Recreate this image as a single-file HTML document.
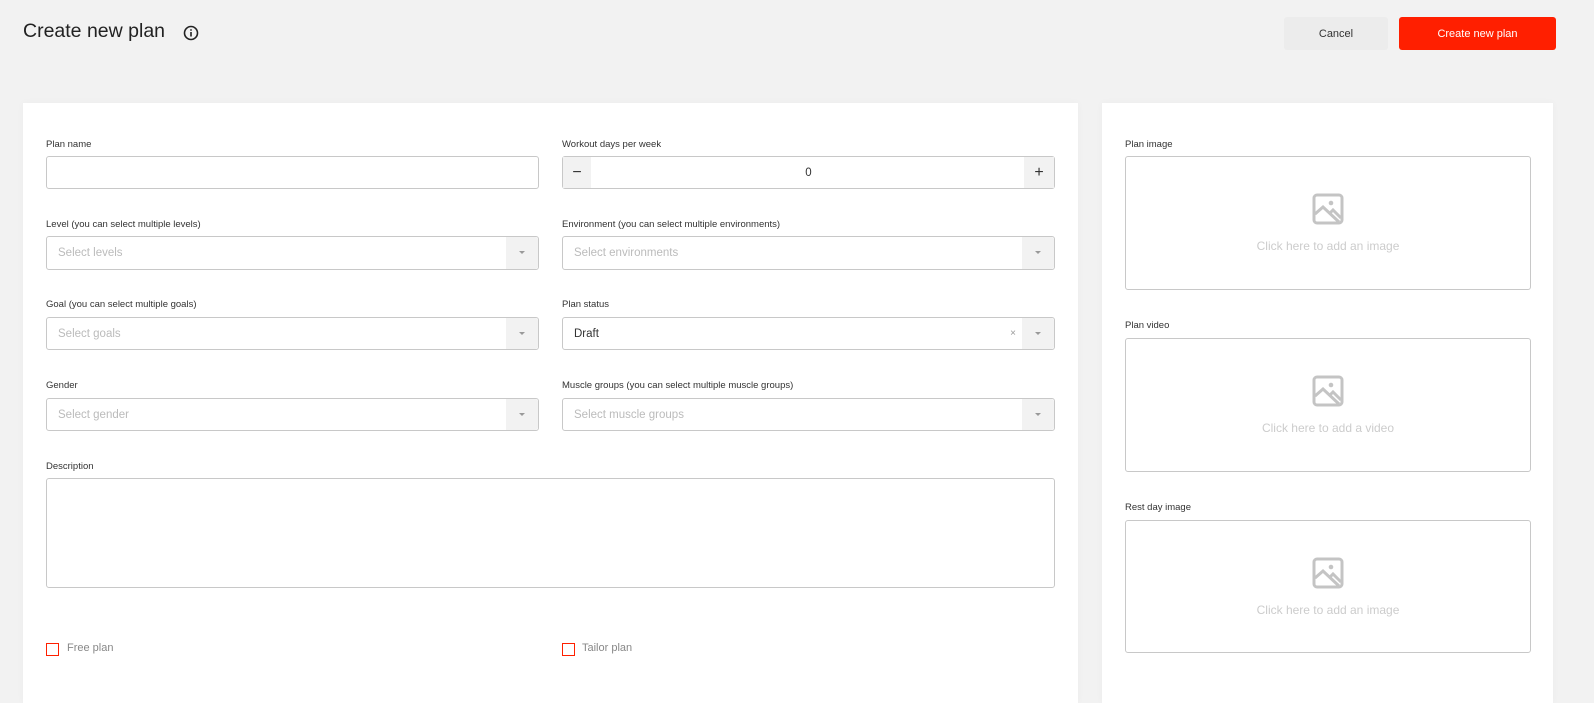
<!DOCTYPE html>
<html><head><style>
*{box-sizing:border-box;margin:0;padding:0}
body{width:1594px;height:697px;background:#f2f2f2;font-family:"Liberation Sans",sans-serif;position:relative;overflow:hidden;color:#333}
.a{position:absolute}
.title{left:23px;top:20px;font-size:19.5px;color:#222}
.btn{top:17px;height:33px;border-radius:3px;font-size:11px;display:flex;align-items:center;justify-content:center}
.card{background:#fff;top:103px;height:600px;box-shadow:0 0 8px rgba(0,0,0,0.03)}
.lbl{font-size:9.5px;color:#333}
.in{height:33px;border:1px solid #c8c8c8;border-radius:3px;background:#fff;font-size:11.5px;color:#bbb;display:flex;align-items:center;padding-left:11px}
.dd{position:absolute;right:0;top:0;bottom:0;width:32px;background:#f2f2f2;border-radius:0 3px 3px 0}
.dd:after{content:"";position:absolute;left:13px;top:14px;border-left:3.5px solid transparent;border-right:3.5px solid transparent;border-top:3.5px solid #999}
.box{border:1px solid #c8c8c8;border-radius:3px;display:flex;flex-direction:column;align-items:center;justify-content:center;font-size:12px;color:#ccc}
.cb{width:13px;height:13px;border:1px solid #ff2000}
.cbl{font-size:11px;color:#888}
</style></head><body>
<div class="a title">Create new plan</div>
<svg class="a" style="left:183px;top:25px" width="16" height="16" viewBox="0 0 16 16"><circle cx="8" cy="8" r="6.5" fill="none" stroke="#222" stroke-width="1.6"/><rect x="7.2" y="7" width="1.6" height="4.5" fill="#222"/><circle cx="8" cy="5" r="0.9" fill="#222"/></svg>
<div class="a btn" style="left:1284px;width:104px;background:#ececec;color:#333">Cancel</div>
<div class="a btn" style="left:1399px;width:157px;background:#ff1f00;color:#fff">Create new plan</div>

<div class="a card" style="left:23px;width:1055px"></div>
<div class="a card" style="left:1102px;width:451px"></div>

<div class="a lbl" style="left:46px;top:139px">Plan name</div>
<div class="a in" style="left:46px;top:156px;width:493px"></div>
<div class="a lbl" style="left:562px;top:139px">Workout days per week</div>
<div class="a in" style="left:562px;top:156px;width:493px;padding:0;color:#333;justify-content:center">0
<div style="position:absolute;left:0;top:0;bottom:0;width:28px;background:#f2f2f2;display:flex;align-items:center;justify-content:center;font-size:16px;color:#333">−</div>
<div style="position:absolute;right:0;top:0;bottom:0;width:30px;background:#f2f2f2;display:flex;align-items:center;justify-content:center;font-size:16px;color:#333">+</div></div>

<div class="a lbl" style="left:46px;top:219px">Level (you can select multiple levels)</div>
<div class="a in" style="left:46px;top:236px;width:493px;height:34px">Select levels<div class="dd"></div></div>
<div class="a lbl" style="left:562px;top:219px">Environment (you can select multiple environments)</div>
<div class="a in" style="left:562px;top:236px;width:493px;height:34px">Select environments<div class="dd"></div></div>

<div class="a lbl" style="left:46px;top:299px">Goal (you can select multiple goals)</div>
<div class="a in" style="left:46px;top:317px;width:493px">Select goals<div class="dd"></div></div>
<div class="a lbl" style="left:562px;top:299px">Plan status</div>
<div class="a in" style="left:562px;top:317px;width:493px;color:#333">Draft<span style="position:absolute;right:38px;font-size:10px;color:#999">×</span><div class="dd"></div></div>

<div class="a lbl" style="left:46px;top:380px">Gender</div>
<div class="a in" style="left:46px;top:398px;width:493px">Select gender<div class="dd"></div></div>
<div class="a lbl" style="left:562px;top:380px">Muscle groups (you can select multiple muscle groups)</div>
<div class="a in" style="left:562px;top:398px;width:493px">Select muscle groups<div class="dd"></div></div>

<div class="a lbl" style="left:46px;top:461px">Description</div>
<div class="a in" style="left:46px;top:478px;width:1009px;height:110px"></div>

<div class="a cb" style="left:46px;top:643px"></div>
<div class="a cbl" style="left:67px;top:642px">Free plan</div>
<div class="a cb" style="left:562px;top:643px"></div>
<div class="a cbl" style="left:582px;top:642px">Tailor plan</div>

<div class="a lbl" style="left:1125px;top:139px">Plan image</div>
<div class="a box" style="left:1125px;top:156px;width:406px;height:134px"><svg width="32" height="32" viewBox="0 0 32 32"><rect x="2" y="2" width="28" height="28" rx="3" fill="none" stroke="#c4c4c4" stroke-width="3"/><circle cx="19" cy="10" r="2.3" fill="#c4c4c4"/><path d="M3 21l8-7 16 15M18 20l3-3 8 8" fill="none" stroke="#c4c4c4" stroke-width="3"/></svg><div style="margin-top:14px">Click here to add an image</div></div>
<div class="a lbl" style="left:1125px;top:320px">Plan video</div>
<div class="a box" style="left:1125px;top:338px;width:406px;height:134px"><svg width="32" height="32" viewBox="0 0 32 32"><rect x="2" y="2" width="28" height="28" rx="3" fill="none" stroke="#c4c4c4" stroke-width="3"/><circle cx="19" cy="10" r="2.3" fill="#c4c4c4"/><path d="M3 21l8-7 16 15M18 20l3-3 8 8" fill="none" stroke="#c4c4c4" stroke-width="3"/></svg><div style="margin-top:14px">Click here to add a video</div></div>
<div class="a lbl" style="left:1125px;top:502px">Rest day image</div>
<div class="a box" style="left:1125px;top:520px;width:406px;height:133px"><svg width="32" height="32" viewBox="0 0 32 32"><rect x="2" y="2" width="28" height="28" rx="3" fill="none" stroke="#c4c4c4" stroke-width="3"/><circle cx="19" cy="10" r="2.3" fill="#c4c4c4"/><path d="M3 21l8-7 16 15M18 20l3-3 8 8" fill="none" stroke="#c4c4c4" stroke-width="3"/></svg><div style="margin-top:14px">Click here to add an image</div></div>
</body></html>
